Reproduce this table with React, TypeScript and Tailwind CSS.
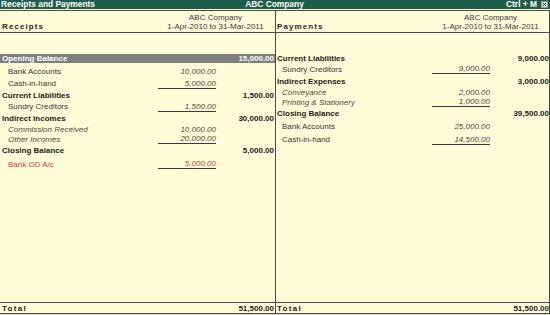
import React from 'react';

type Row = {
  kind: 'bar' | 'group' | 'sub' | 'ledger';
  label: string;
  sub?: string;
  amt?: string;
  line?: boolean;
  red?: boolean;
  h: string;
};

const left: Row[] = [
  { kind: 'bar', label: 'Opening Balance', amt: '15,000.00', h: 'h-[9px]' },
  { kind: 'sub', label: 'Bank Accounts', sub: '10,000.00', h: 'h-[12px] mt-[2px]' },
  { kind: 'sub', label: 'Cash-in-hand', sub: '5,000.00', line: true, h: 'h-[13px]' },
  { kind: 'group', label: 'Current Liabilities', amt: '1,500.00', h: 'h-[11px]' },
  { kind: 'sub', label: 'Sundry Creditors', sub: '1,500.00', line: true, h: 'h-[11px]' },
  { kind: 'group', label: 'Indirect Incomes', amt: '30,000.00', h: 'h-[12px]' },
  { kind: 'ledger', label: 'Commission Received', sub: '10,000.00', h: 'h-[10px]' },
  { kind: 'ledger', label: 'Other Incomes', sub: '20,000.00', line: true, h: 'h-[10px]' },
  { kind: 'group', label: 'Closing Balance', amt: '5,000.00', h: 'h-[13px]' },
  { kind: 'sub', label: 'Bank OD A/c', sub: '5,000.00', line: true, red: true, h: 'h-[14px]' },
];

const right: Row[] = [
  { kind: 'group', label: 'Current Liabilities', amt: '9,000.00', h: 'h-[9px]' },
  { kind: 'sub', label: 'Sundry Creditors', sub: '9,000.00', line: true, h: 'h-[12px]' },
  { kind: 'group', label: 'Indirect Expenses', amt: '3,000.00', h: 'h-[12px]' },
  { kind: 'ledger', label: 'Conveyance', sub: '2,000.00', h: 'h-[10px]' },
  { kind: 'ledger', label: 'Printing & Stationery', sub: '1,000.00', line: true, h: 'h-[10px]' },
  { kind: 'group', label: 'Closing Balance', amt: '39,500.00', h: 'h-[12px]' },
  { kind: 'sub', label: 'Bank Accounts', sub: '25,000.00', h: 'h-[15px]' },
  { kind: 'sub', label: 'Cash-in-hand', sub: '14,500.00', line: true, h: 'h-[11px]' },
];

function ReportRow({ row, side }: { row: Row; side: 'l' | 'r' }) {
  const isBar = row.kind === 'bar';
  const isHead = row.kind === 'group' || isBar;
  // Group heads start at the edge, ledgers and sub-groups are indented
  const pad = isHead ? (side === 'l' ? 'pl-[2px]' : 'pl-[1px]') : side === 'l' ? 'pl-[8px]' : 'pl-[6px]';
  const labelColor = isBar
    ? 'text-white font-bold'
    : isHead
      ? 'text-[#1c1c1c] font-bold'
      : row.red
        ? 'text-[#e2323c]'
        : row.kind === 'ledger'
          ? 'text-[#4a4a4a] italic'
          : 'text-[#34343c]';

  return (
    <div className={`flex items-center ${row.h} ${isBar ? 'bg-[#7e7e7e]' : ''}`}>
      <div className={`flex-1 whitespace-nowrap leading-[9px] ${pad} ${labelColor}`}>{row.label}</div>
      <div className="w-[58px] flex justify-end">
        {row.sub && (
          <span
            className={`w-full text-right italic leading-[9px] ${row.red ? 'text-[#e2323c]' : 'text-[#4a4a4a]'} ${
              row.line ? 'border-b border-[#3a3a3a]' : ''
            }`}
          >
            {row.sub}
          </span>
        )}
      </div>
      <div
        className={`w-[59px] text-right font-bold leading-[9px] ${side === 'l' ? 'pr-[1px]' : ''} ${
          isBar ? 'text-white' : 'text-[#1c1c1c]'
        }`}
      >
        {row.amt}
      </div>
    </div>
  );
}

function Column({ title, rows, side }: { title: string; rows: Row[]; side: 'l' | 'r' }) {
  return (
    <div
      className={`flex flex-col border-r border-[#4a4a4a] ${side === 'l' ? 'w-[276px]' : 'w-[274px]'}`}
    >
      {/* column header */}
      <div className="h-[22px] flex border-b border-[#4a4a4a] pt-[2px]">
        <div
          className={`flex-1 flex items-end pb-[1px] font-bold tracking-[1.1px] text-[#2a2a2a] ${
            side === 'l' ? 'pl-[2px]' : 'pl-[1px]'
          }`}
        >
          <span className="leading-[9px]">{title}</span>
        </div>
        <div className={`w-[117px] text-center leading-[9px] text-[#3a3a52] ${side === 'l' ? 'mr-[1px]' : ''}`}>
          <div>ABC Company</div>
          <div>1-Apr-2010 to 31-Mar-2011</div>
        </div>
      </div>

      <div className="flex-1 pt-[21px]">
        {rows.map((r, i) => (
          <ReportRow key={i} row={r} side={side} />
        ))}
      </div>

      {/* total */}
      <div className="h-[11px] flex items-center border-t border-[#4a4a4a] font-bold text-[#1c1c1c]">
        <span className={`flex-1 tracking-[1.3px] leading-[9px] ${side === 'l' ? 'pl-[2px]' : 'pl-[1px]'}`}>Total</span>
        <span className={`leading-[9px] ${side === 'l' ? 'pr-[1px]' : ''}`}>51,500.00</span>
      </div>
    </div>
  );
}

export default function App() {
  return (
    <div className="w-[550px] h-[315px] bg-[#d8d6c8] font-['Liberation_Sans',Arial,sans-serif] text-[8px] overflow-hidden">
      {/* title bar */}
      <div className="h-[9px] bg-[#1f5d4b] flex items-center text-white font-bold text-[8.4px] leading-[9px] pl-[1px] pr-[2px]">
        <span className="flex-1">Receipts and Payments</span>
        <span className="flex-1 text-center">ABC Company</span>
        <span className="flex-1 flex justify-end items-center gap-[4px]">
          <span>Ctrl + M</span>
          <svg width="7" height="7" viewBox="0 0 7 7">
            <rect x="0.5" y="0.5" width="6" height="6" fill="#e8e8e8" stroke="#9a9a9a" />
            <path d="M1.8 1.8 L5.2 5.2 M5.2 1.8 L1.8 5.2" stroke="#2a2a2a" strokeWidth="1" />
          </svg>
        </span>
      </div>
      <div className="h-[1px] bg-[#fdfdd7]" />

      <div className="h-[304px] flex bg-[#fdfdd7] border-t border-b border-[#4a4a4a]">
        <Column title="Receipts" rows={left} side="l" />
        <Column title="Payments" rows={right} side="r" />
      </div>
    </div>
  );
}
